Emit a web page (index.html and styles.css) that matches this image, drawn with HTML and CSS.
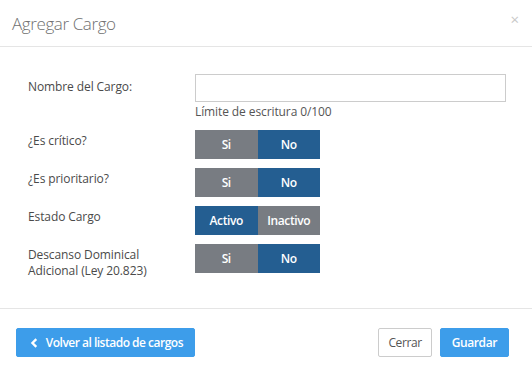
FILE: index.html
```html
<!DOCTYPE html>
<html lang="es">
<head>
    <meta charset="UTF-8">
    <meta name="viewport" content="width=device-width, initial-scale=1.0">
    <title>Agregar Cargo</title>
    <link rel="stylesheet" href="styles.css">
</head>
<body>
    <div class="modal">
        <div class="modal-header">
            <h4 class="modal-title">Agregar Cargo</h4>
            <span class="close">&times;</span>
        </div>

        <div class="modal-body">
            <div class="form-row">
                <label>Nombre del Cargo:</label>
                <div class="field">
                    <input type="text" class="input">
                    <p class="help">Límite de escritura 0/100</p>
                </div>
            </div>

            <div class="form-row">
                <label>¿Es crítico?</label>
                <div class="toggle">
                    <span class="off">Si</span>
                    <span class="on">No</span>
                </div>
            </div>

            <div class="form-row">
                <label>¿Es prioritario?</label>
                <div class="toggle">
                    <span class="off">Si</span>
                    <span class="on">No</span>
                </div>
            </div>

            <div class="form-row">
                <label>Estado Cargo</label>
                <div class="toggle">
                    <span class="on">Activo</span>
                    <span class="off">Inactivo</span>
                </div>
            </div>

            <div class="form-row">
                <label>Descanso Dominical<br>Adicional (Ley 20.823)</label>
                <div class="toggle">
                    <span class="off">Si</span>
                    <span class="on">No</span>
                </div>
            </div>
        </div>

        <div class="modal-footer">
            <button class="btn btn-primary btn-back">
                <svg width="9" height="10" viewBox="0 0 9 10"><path d="M6.5 1 L2.5 5 L6.5 9" fill="none" stroke="#fff" stroke-width="2.4"/></svg>
                Volver al listado de cargos
            </button>
            <div class="actions">
                <button class="btn btn-default">Cerrar</button>
                <button class="btn btn-primary">Guardar</button>
            </div>
        </div>
    </div>
</body>
</html>
```

FILE: styles.css
```css
body {
    margin: 0;
    font-family: 'Open Sans', sans-serif;
    font-size: 12px;
    color: #4a4a4a;
    background: #fff;
}

.modal {
    width: 532px;
    height: 374px;
}

.modal-header {
    height: 46px;
    display: flex;
    align-items: center;
    justify-content: space-between;
    padding: 0 13px 0 12px;
    border-bottom: 1px solid #e5e5e5;
}

.modal-title {
    margin: 0;
    font-size: 17px;
    font-weight: 300;
    letter-spacing: -0.4px;
    color: #707070;
}

.close {
    font-size: 15px;
    color: #c8c8c8;
    margin-top: -8px;
}

.modal-body {
    padding: 27px 26px 29px 28px;
    display: flex;
    flex-direction: column;
    gap: 9px;
}

.form-row {
    display: grid;
    grid-template-columns: 167px 1fr;
}

.form-row label {
    padding-top: 3px;
    line-height: 16px;
    letter-spacing: -0.1px;
}

.form-row:first-child label {
    padding-top: 5px;
}

.input {
    display: block;
    width: 100%;
    height: 28px;
    box-sizing: border-box;
    border: 1px solid #ccc;
    margin: 0;
}

.help {
    margin: 2px 0 1px;
    line-height: 16px;
    color: #555;
    letter-spacing: -0.1px;
}

.toggle {
    display: flex;
    width: 125px;
    height: 29px;
}

.toggle span {
    flex: 1;
    display: flex;
    align-items: center;
    justify-content: center;
    color: #fff;
    font-size: 12px;
    font-weight: 600;
    letter-spacing: -0.4px;
}

.toggle .off {
    background: #787c82;
}

.toggle .on {
    background: #245e91;
}

.modal-footer {
    border-top: 1px solid #e5e5e5;
    padding: 19px 23px 0 16px;
    display: flex;
    justify-content: space-between;
}

.actions {
    display: flex;
    gap: 8px;
}

.btn {
    height: 29px;
    font-family: 'Open Sans', sans-serif;
    font-size: 12px;
    font-weight: 600;
    border-radius: 2px;
    padding: 0 11px;
    display: flex;
    align-items: center;
    justify-content: center;
    white-space: nowrap;
    letter-spacing: -0.4px;
}

.btn-primary {
    background: #3d9dea;
    border: 1px solid #3d9dea;
    color: #fff;
}

.btn-back {
    width: 179px;
    padding: 0 11px 0 13px;
    justify-content: flex-start;
    gap: 7px;
    letter-spacing: -0.5px;
}

.btn-default {
    background: #fff;
    border: 1px solid #ccc;
    color: #555;
    font-weight: 400;
    padding: 0 9px;
}
```
